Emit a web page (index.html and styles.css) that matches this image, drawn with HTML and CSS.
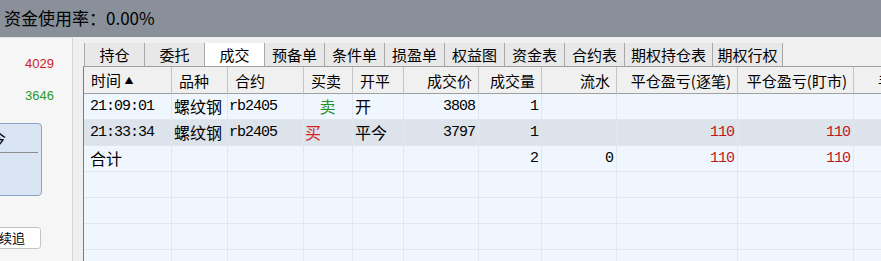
FILE: index.html
```html
<!DOCTYPE html>
<html lang="zh-CN">
<head>
    <meta charset="UTF-8">
    <title>成交</title>
    <link rel="stylesheet" href="styles.css">
</head>
<body>
    <div class="topbar">资金使用率：0.00%</div>

    <div class="main">
        <!-- Left order panel, partly scrolled out of view -->
        <aside class="side">
            <div class="quote red">4029</div>
            <div class="quote green">3646</div>
            <div class="order-btn">
                <div class="order-top">平今</div>
                <div class="order-bottom">仓</div>
            </div>
            <div class="chase-btn">连续追</div>
        </aside>

        <section class="trades">
            <nav class="tabs">
                <div class="tab">持仓</div>
                <div class="tab">委托</div>
                <div class="tab active">成交</div>
                <div class="tab">预备单</div>
                <div class="tab">条件单</div>
                <div class="tab">损盈单</div>
                <div class="tab">权益图</div>
                <div class="tab">资金表</div>
                <div class="tab">合约表</div>
                <div class="tab wide">期权持仓表</div>
                <div class="tab mid">期权行权</div>
            </nav>

            <table class="grid">
                <colgroup>
                    <col style="width:88px">
                    <col style="width:56px">
                    <col style="width:76px">
                    <col style="width:49px">
                    <col style="width:51px">
                    <col style="width:75px">
                    <col style="width:63px">
                    <col style="width:75px">
                    <col style="width:121px">
                    <col style="width:116px">
                    <col style="width:75px">
                </colgroup>
                <thead>
                    <tr>
                        <th>时间&nbsp;<span class="sort">▲</span></th>
                        <th>品种</th>
                        <th>合约</th>
                        <th>买卖</th>
                        <th>开平</th>
                        <th class="num">成交价</th>
                        <th class="num">成交量</th>
                        <th class="num">流水</th>
                        <th class="num">平仓盈亏(逐笔)</th>
                        <th class="num">平仓盈亏(盯市)</th>
                        <th class="fee">手续费</th>
                    </tr>
                </thead>
                <tbody>
                    <tr>
                        <td class="mono time">21:09:01</td>
                        <td class="cn">螺纹钢</td>
                        <td class="mono code">rb2405</td>
                        <td class="cn side-col sell">卖</td>
                        <td class="cn">开</td>
                        <td class="mono num">3808</td>
                        <td class="mono num">1</td>
                        <td class="mono num"></td>
                        <td class="mono num"></td>
                        <td class="mono num"></td>
                        <td></td>
                    </tr>
                    <tr class="selected">
                        <td class="mono time">21:33:34</td>
                        <td class="cn">螺纹钢</td>
                        <td class="mono code">rb2405</td>
                        <td class="cn side-col buy">买</td>
                        <td class="cn">平今</td>
                        <td class="mono num">3797</td>
                        <td class="mono num">1</td>
                        <td class="mono num"></td>
                        <td class="mono num loss">110</td>
                        <td class="mono num loss">110</td>
                        <td></td>
                    </tr>
                    <tr>
                        <td class="cn total">合计</td>
                        <td></td>
                        <td></td>
                        <td></td>
                        <td></td>
                        <td></td>
                        <td class="mono num">2</td>
                        <td class="mono num">0</td>
                        <td class="mono num loss">110</td>
                        <td class="mono num loss">110</td>
                        <td></td>
                    </tr>
                    <tr><td></td><td></td><td></td><td></td><td></td><td></td><td></td><td></td><td></td><td></td><td></td></tr>
                    <tr><td></td><td></td><td></td><td></td><td></td><td></td><td></td><td></td><td></td><td></td><td></td></tr>
                    <tr><td></td><td></td><td></td><td></td><td></td><td></td><td></td><td></td><td></td><td></td><td></td></tr>
                    <tr><td></td><td></td><td></td><td></td><td></td><td></td><td></td><td></td><td></td><td></td><td></td></tr>
                </tbody>
            </table>
        </section>
    </div>
</body>
</html>
```

FILE: styles.css
```css
html, body {
    margin: 0;
    padding: 0;
}
body {
    width: 881px;
    height: 261px;
    overflow: hidden;
    background-color: #f0f0f0;
    font-family: "Noto Sans CJK SC", "Liberation Sans", sans-serif;
    color: #000;
}

/* Top status bar */
.topbar {
    height: 37px;
    line-height: 36px;
    padding-left: 4px;
    font-size: 17px;
    background-color: #899099;
    color: #000;
}

.main {
    display: flex;
    height: 224px;
}

/* Left order panel */
.side {
    width: 72px;
    flex: none;
    background-color: #f6f6f6;
    border-right: 1px solid #d6d6d6;
    border-top: 1px solid #e2e2e2;
    overflow: hidden;
}
.quote {
    font-family: "Liberation Sans", sans-serif;
    font-size: 13px;
    line-height: 16px;
    text-align: right;
    padding-right: 18px;
}
.quote.red {
    color: #d0201c;
    margin-top: 18px;
}
.quote.green {
    color: #2a9a2a;
    margin-top: 16px;
}
.order-btn {
    width: 76px;
    height: 73px;
    margin-top: 19px;
    margin-left: -34px;
    box-sizing: border-box;
    background-color: #dae5f3;
    border: 1px solid #86a3c6;
    border-radius: 4px;
    font-size: 15px;
}
.order-top {
    height: 28px;
    line-height: 28px;
    padding-left: 9px;
    border-bottom: 1px solid #8c8c8c;
    margin-right: 3px;
}
.order-bottom {
    line-height: 36px;
    padding-left: 18px;
    color: #1b3fa8;
}
.chase-btn {
    width: 56px;
    height: 22px;
    margin-top: 31px;
    margin-left: -15px;
    box-sizing: border-box;
    background-color: #fff;
    border: 1px solid #c4c4c4;
    border-radius: 3px;
    font-size: 13px;
    line-height: 20px;
    text-align: right;
    padding-right: 15px;
    white-space: nowrap;
}

/* Trades area */
.trades {
    flex: 1;
    margin-left: 10px;
    padding-top: 6px;
    overflow: hidden;
}
.tabs {
    display: flex;
    height: 23px;
    border-bottom: 1px solid #a0a0a0;
    padding-left: 1px;
}
.tab {
    width: 60px;
    box-sizing: border-box;
    border-left: 1px solid #a8a8a8;
    background-color: #e8e8e8;
    font-size: 15px;
    line-height: 23px;
    text-align: center;
}
.tab.wide {
    width: 88px;
}
.tab.mid {
    width: 71px;
    border-right: 1px solid #a8a8a8;
}
.tab.active {
    background-color: #fff;
}

/* Data grid */
.grid {
    border-collapse: separate;
    border-spacing: 0;
    table-layout: fixed;
    width: 845px;
    border-left: 1px solid #7a7a7a;
}
.grid th {
    height: 25px;
    padding: 0 6px 0 7px;
    font-size: 15px;
    font-weight: normal;
    line-height: 25px;
    text-align: left;
    background-color: #f0f0f0;
    border-right: 1px solid #c4c4c4;
    border-bottom: 1px solid #a0a0a0;
    white-space: nowrap;
    overflow: hidden;
}
.grid th.num {
    text-align: right;
}
.grid th.fee {
    padding-left: 24px;
}
.grid th .sort {
    font-size: 9px;
    vertical-align: 2px;
}
.grid td {
    height: 25px;
    padding: 0 2px;
    line-height: 25px;
    font-size: 16px;
    background-color: #f0f6fd;
    border-right: 1px solid #e2e7ed;
    border-bottom: 1px solid #e2e7ed;
    white-space: nowrap;
    overflow: hidden;
}
.grid tr.selected td {
    background-color: #dde3ea;
}
.grid td.mono {
    font-family: "Liberation Mono", monospace;
    font-size: 15px;
    letter-spacing: -1px;
}
.grid td.num {
    text-align: right;
    padding-right: 3px;
}
.grid td.time {
    padding-left: 6px;
}
.grid td.code {
    padding-left: 1px;
}
.grid td.total {
    padding-left: 6px;
}
.grid td.side-col {
    padding-left: 1px;
}
.grid td.sell {
    color: #23902a;
    text-align: center;
}
.grid td.buy {
    color: #d22222;
}
.grid td.loss {
    color: #c01818;
}
```
